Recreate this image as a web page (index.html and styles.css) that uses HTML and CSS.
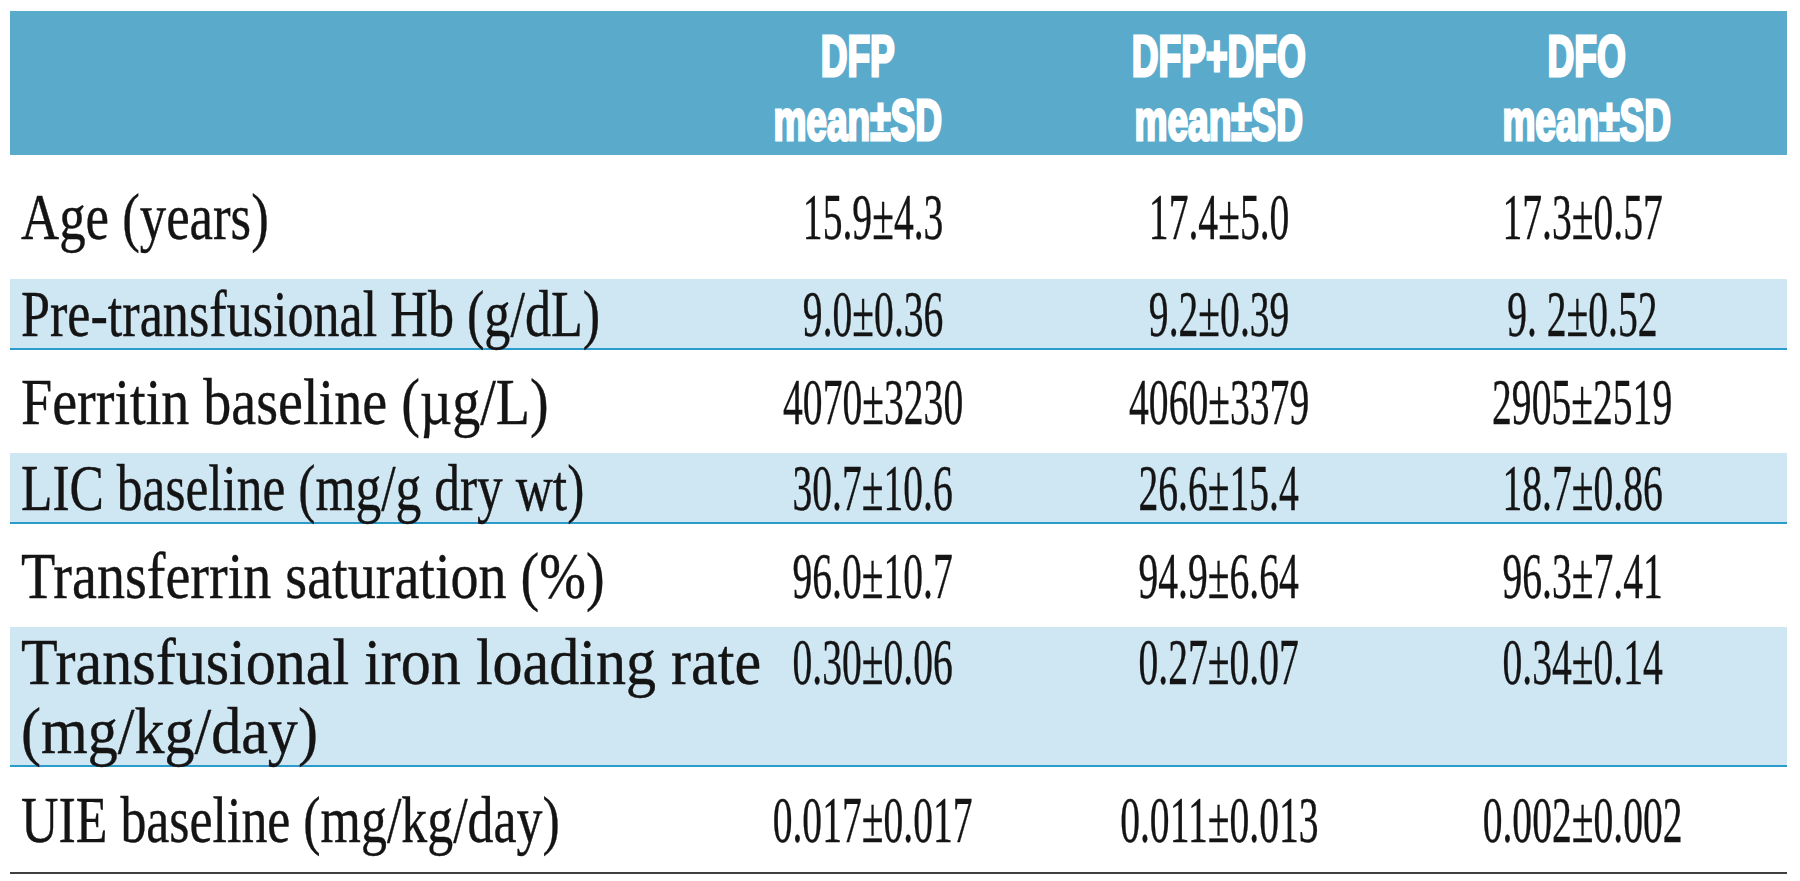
FILE: index.html
```html
<!DOCTYPE html>
<html lang="en">
<head>
<meta charset="utf-8">
<title>Patient baseline characteristics</title>
<link rel="stylesheet" href="styles.css">
</head>
<body>
<table class="data">
  <colgroup>
    <col class="col-label">
    <col class="col-dfp">
    <col class="col-combo">
    <col class="col-dfo">
  </colgroup>
  <thead>
    <tr>
      <th class="corner"></th>
      <th class="h-dfp"><span class="hd">DFP<br>mean±SD</span></th>
      <th class="h-combo"><span class="hd">DFP+DFO<br>mean±SD</span></th>
      <th class="h-dfo"><span class="hd">DFO<br>mean±SD</span></th>
    </tr>
  </thead>
  <tbody>
    <tr class="row-first">
      <td class="label"><span class="lb lb-age">Age (years)</span></td>
      <td class="num"><span class="nm">15.9±4.3</span></td>
      <td class="num"><span class="nm">17.4±5.0</span></td>
      <td class="num last"><span class="nm">17.3±0.57</span></td>
    </tr>
    <tr class="row-blue">
      <td class="label"><span class="lb lb-hb">Pre-transfusional Hb (g/dL)</span></td>
      <td class="num"><span class="nm">9.0±0.36</span></td>
      <td class="num"><span class="nm">9.2±0.39</span></td>
      <td class="num last"><span class="nm">9. 2±0.52</span></td>
    </tr>
    <tr class="row-white">
      <td class="label"><span class="lb lb-fer">Ferritin baseline (µg/L)</span></td>
      <td class="num"><span class="nm">4070±3230</span></td>
      <td class="num"><span class="nm">4060±3379</span></td>
      <td class="num last"><span class="nm">2905±2519</span></td>
    </tr>
    <tr class="row-blue">
      <td class="label"><span class="lb lb-lic">LIC baseline (mg/g dry wt)</span></td>
      <td class="num"><span class="nm">30.7±10.6</span></td>
      <td class="num"><span class="nm">26.6±15.4</span></td>
      <td class="num last"><span class="nm">18.7±0.86</span></td>
    </tr>
    <tr class="row-white">
      <td class="label"><span class="lb lb-tsat">Transferrin saturation (%)</span></td>
      <td class="num"><span class="nm">96.0±10.7</span></td>
      <td class="num"><span class="nm">94.9±6.64</span></td>
      <td class="num last"><span class="nm">96.3±7.41</span></td>
    </tr>
    <tr class="row-blue">
      <td class="label"><span class="lb lb-rate">Transfusional iron loading rate<br>(mg/kg/day)</span></td>
      <td class="num"><span class="nm">0.30±0.06</span></td>
      <td class="num"><span class="nm">0.27±0.07</span></td>
      <td class="num last"><span class="nm">0.34±0.14</span></td>
    </tr>
    <tr class="row-last">
      <td class="label"><span class="lb lb-uie">UIE baseline (mg/kg/day)</span></td>
      <td class="num"><span class="nm">0.017±0.017</span></td>
      <td class="num"><span class="nm">0.011±0.013</span></td>
      <td class="num last"><span class="nm">0.002±0.002</span></td>
    </tr>
  </tbody>
</table>
</body>
</html>
```

FILE: styles.css
```css
html, body {
  margin: 0;
  padding: 0;
  background: #ffffff;
}

body {
  padding: 11px 0 0 10px;
}

.data {
  border-collapse: separate;
  border-spacing: 0;
  table-layout: fixed;
  width: 1777px;
  color: #141414;
  font-family: "Liberation Serif", "Times New Roman", serif;
  font-size: 66px;
}

.col-label { width: 690px; }
.col-dfp { width: 346px; }
.col-combo { width: 346px; }
.col-dfo { width: 395px; }

/* header */
.data thead th {
  background: #5aaacb;
  height: 144px;
  padding: 10px 0 0 0;
  box-sizing: border-box;
  vertical-align: middle;
  text-align: center;
  color: #ffffff;
  font-family: "Liberation Sans", Arial, sans-serif;
  font-weight: 700;
  font-size: 57px;
  line-height: 64px;
}

.data thead th.h-dfp { padding-right: 30px; }
.data thead th.h-dfo { padding-right: 5px; }

.hd {
  display: inline-block;
  transform: scaleX(0.65);
  transform-origin: center center;
  white-space: nowrap;
  -webkit-text-stroke: 3px #ffffff;
}

/* body cells */
.data td {
  line-height: 69px;
  padding: 0;
  vertical-align: top;
  white-space: nowrap;
  -webkit-text-stroke: 0.4px #141414;
}

.data td.label {
  padding-left: 11px;
  text-align: left;
  overflow: visible;
}

.data td.num {
  text-align: center;
}

.data td.last {
  padding-right: 14px;
}

.lb {
  display: inline-block;
  transform-origin: left center;
}

.lb-age { transform: scaleX(0.80); }
.lb-hb { transform: scaleX(0.79); }
.lb-fer { transform: scaleX(0.85); }
.lb-lic { transform: scaleX(0.78); }
.lb-tsat { transform: scaleX(0.85); }
.lb-rate { transform: scaleX(0.91); }
.lb-uie { transform: scaleX(0.786); }

.nm {
  display: inline-block;
  transform: scaleX(0.6);
  transform-origin: center center;
}

/* rows */
.row-first td {
  padding-top: 27px;
  padding-bottom: 28px;
}

.row-white td {
  padding-top: 17px;
  padding-bottom: 17px;
}

.row-blue td {
  background: #cfe6f3;
  border-bottom: 2px solid #2b9bcb;
}

.row-last td {
  padding-top: 18px;
  padding-bottom: 18px;
  border-bottom: 2px solid #404040;
}
```
